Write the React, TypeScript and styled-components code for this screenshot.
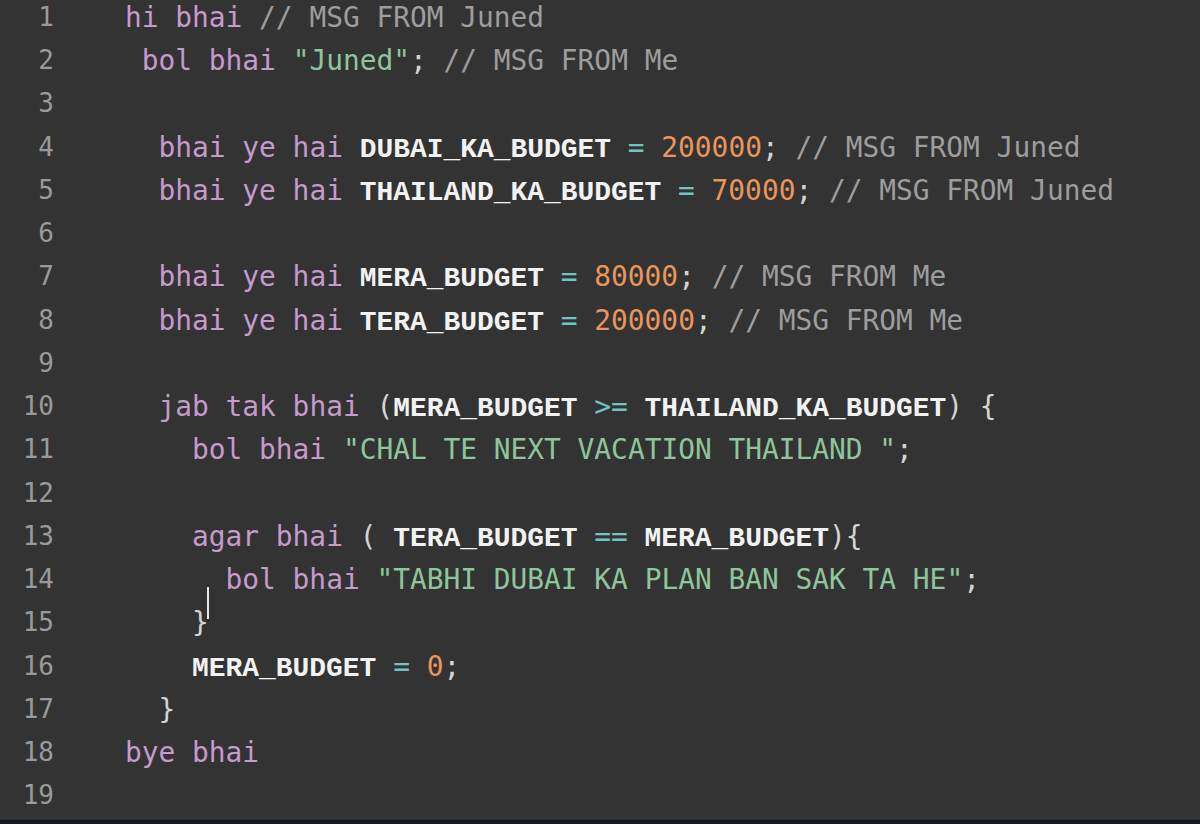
import React from "react";
import styled, { createGlobalStyle } from "styled-components";

const Global = createGlobalStyle`
  html, body { margin: 0; padding: 0; background: #333333; }
  body { width: 1200px; height: 824px; overflow: hidden; }
`;

const Page = styled.div`
  width: 1200px;
  height: 824px;
  background: #333333;
  display: flex;
  flex-direction: column;
  overflow: hidden;
`;

const Editor = styled.div`
  flex: 1;
  display: flex;
  flex-direction: column;
  margin-top: -4.3px;
`;

const Line = styled.div`
  display: grid;
  grid-template-columns: 54px 1fr;
  height: 43.28px;
  line-height: 43.28px;
  white-space: pre;
`;

const Gutter = styled.div`
  text-align: right;
  font-family: "DejaVu Sans Mono", monospace;
  font-size: 26px;
  color: #9a9a9a;
`;

const Code = styled.div<{ $indent: number }>`
  position: relative;
  padding-left: ${(p) => 71 + p.$indent * 16.76}px;
  font-family: "DejaVu Sans Mono", monospace;
  font-size: 27.85px;
  color: #d4d4d4;
`;

const Kw = styled.span`
  color: #c59bcb;
`;
const Str = styled.span`
  color: #8fc59c;
`;
const Num = styled.span`
  color: #ea955c;
`;
const Cmt = styled.span`
  color: #9d9d9d;
`;
const Op = styled.span`
  color: #72c3c3;
`;
const Id = styled.span`
  font-family: "Courier New", "Nimbus Mono PS", "Liberation Mono", monospace;
  font-weight: bold;
  font-size: 27.93px;
  color: #f2f2f2;
`;
const Punc = styled.span`
  color: #d4d4d4;
`;

const Caret = styled.span`
  position: absolute;
  left: 153px;
  top: -14px;
  width: 1.5px;
  height: 32px;
  background: #e8e8e8;
`;

const BottomBar = styled.div`
  height: 4px;
  background: #171824;
  border-top: 1px solid #2a2a30;
`;

type Row = { indent: number; content: React.ReactNode; caret?: boolean };

const rows: Row[] = [
  { indent: 0, content: (<><Kw>hi bhai</Kw> <Cmt>// MSG FROM Juned</Cmt></>) },
  { indent: 1, content: (<><Kw>bol bhai</Kw> <Str>"Juned"</Str><Punc>;</Punc> <Cmt>// MSG FROM Me</Cmt></>) },
  { indent: 0, content: null },
  { indent: 2, content: (<><Kw>bhai ye hai</Kw> <Id>DUBAI_KA_BUDGET</Id> <Op>=</Op> <Num>200000</Num><Punc>;</Punc> <Cmt>// MSG FROM Juned</Cmt></>) },
  { indent: 2, content: (<><Kw>bhai ye hai</Kw> <Id>THAILAND_KA_BUDGET</Id> <Op>=</Op> <Num>70000</Num><Punc>;</Punc> <Cmt>// MSG FROM Juned</Cmt></>) },
  { indent: 0, content: null },
  { indent: 2, content: (<><Kw>bhai ye hai</Kw> <Id>MERA_BUDGET</Id> <Op>=</Op> <Num>80000</Num><Punc>;</Punc> <Cmt>// MSG FROM Me</Cmt></>) },
  { indent: 2, content: (<><Kw>bhai ye hai</Kw> <Id>TERA_BUDGET</Id> <Op>=</Op> <Num>200000</Num><Punc>;</Punc> <Cmt>// MSG FROM Me</Cmt></>) },
  { indent: 0, content: null },
  { indent: 2, content: (<><Kw>jab tak bhai</Kw> <Punc>(</Punc><Id>MERA_BUDGET</Id> <Op>&gt;=</Op> <Id>THAILAND_KA_BUDGET</Id><Punc>) {"{"}</Punc></>) },
  { indent: 4, content: (<><Kw>bol bhai</Kw> <Str>"CHAL TE NEXT VACATION THAILAND "</Str><Punc>;</Punc></>) },
  { indent: 0, content: null },
  { indent: 4, content: (<><Kw>agar bhai</Kw> <Punc>(</Punc> <Id>TERA_BUDGET</Id> <Op>==</Op> <Id>MERA_BUDGET</Id><Punc>){"{"}</Punc></>) },
  { indent: 6, content: (<><Kw>bol bhai</Kw> <Str>"TABHI DUBAI KA PLAN BAN SAK TA HE"</Str><Punc>;</Punc></>) },
  { indent: 4, content: (<Punc>{"}"}</Punc>), caret: true },
  { indent: 4, content: (<><Id>MERA_BUDGET</Id> <Op>=</Op> <Num>0</Num><Punc>;</Punc></>) },
  { indent: 2, content: (<Punc>{"}"}</Punc>) },
  { indent: 0, content: (<Kw>bye bhai</Kw>) },
  { indent: 0, content: null },
];

export default function App() {
  return (
    <>
      <Global />
      <Page>
        <Editor>
          {rows.map((r, i) => (
            <Line key={i}>
              <Gutter>{i + 1}</Gutter>
              <Code $indent={r.indent}>
                {r.content}
                {r.caret && <Caret />}
              </Code>
            </Line>
          ))}
        </Editor>
        <BottomBar />
      </Page>
    </>
  );
}
